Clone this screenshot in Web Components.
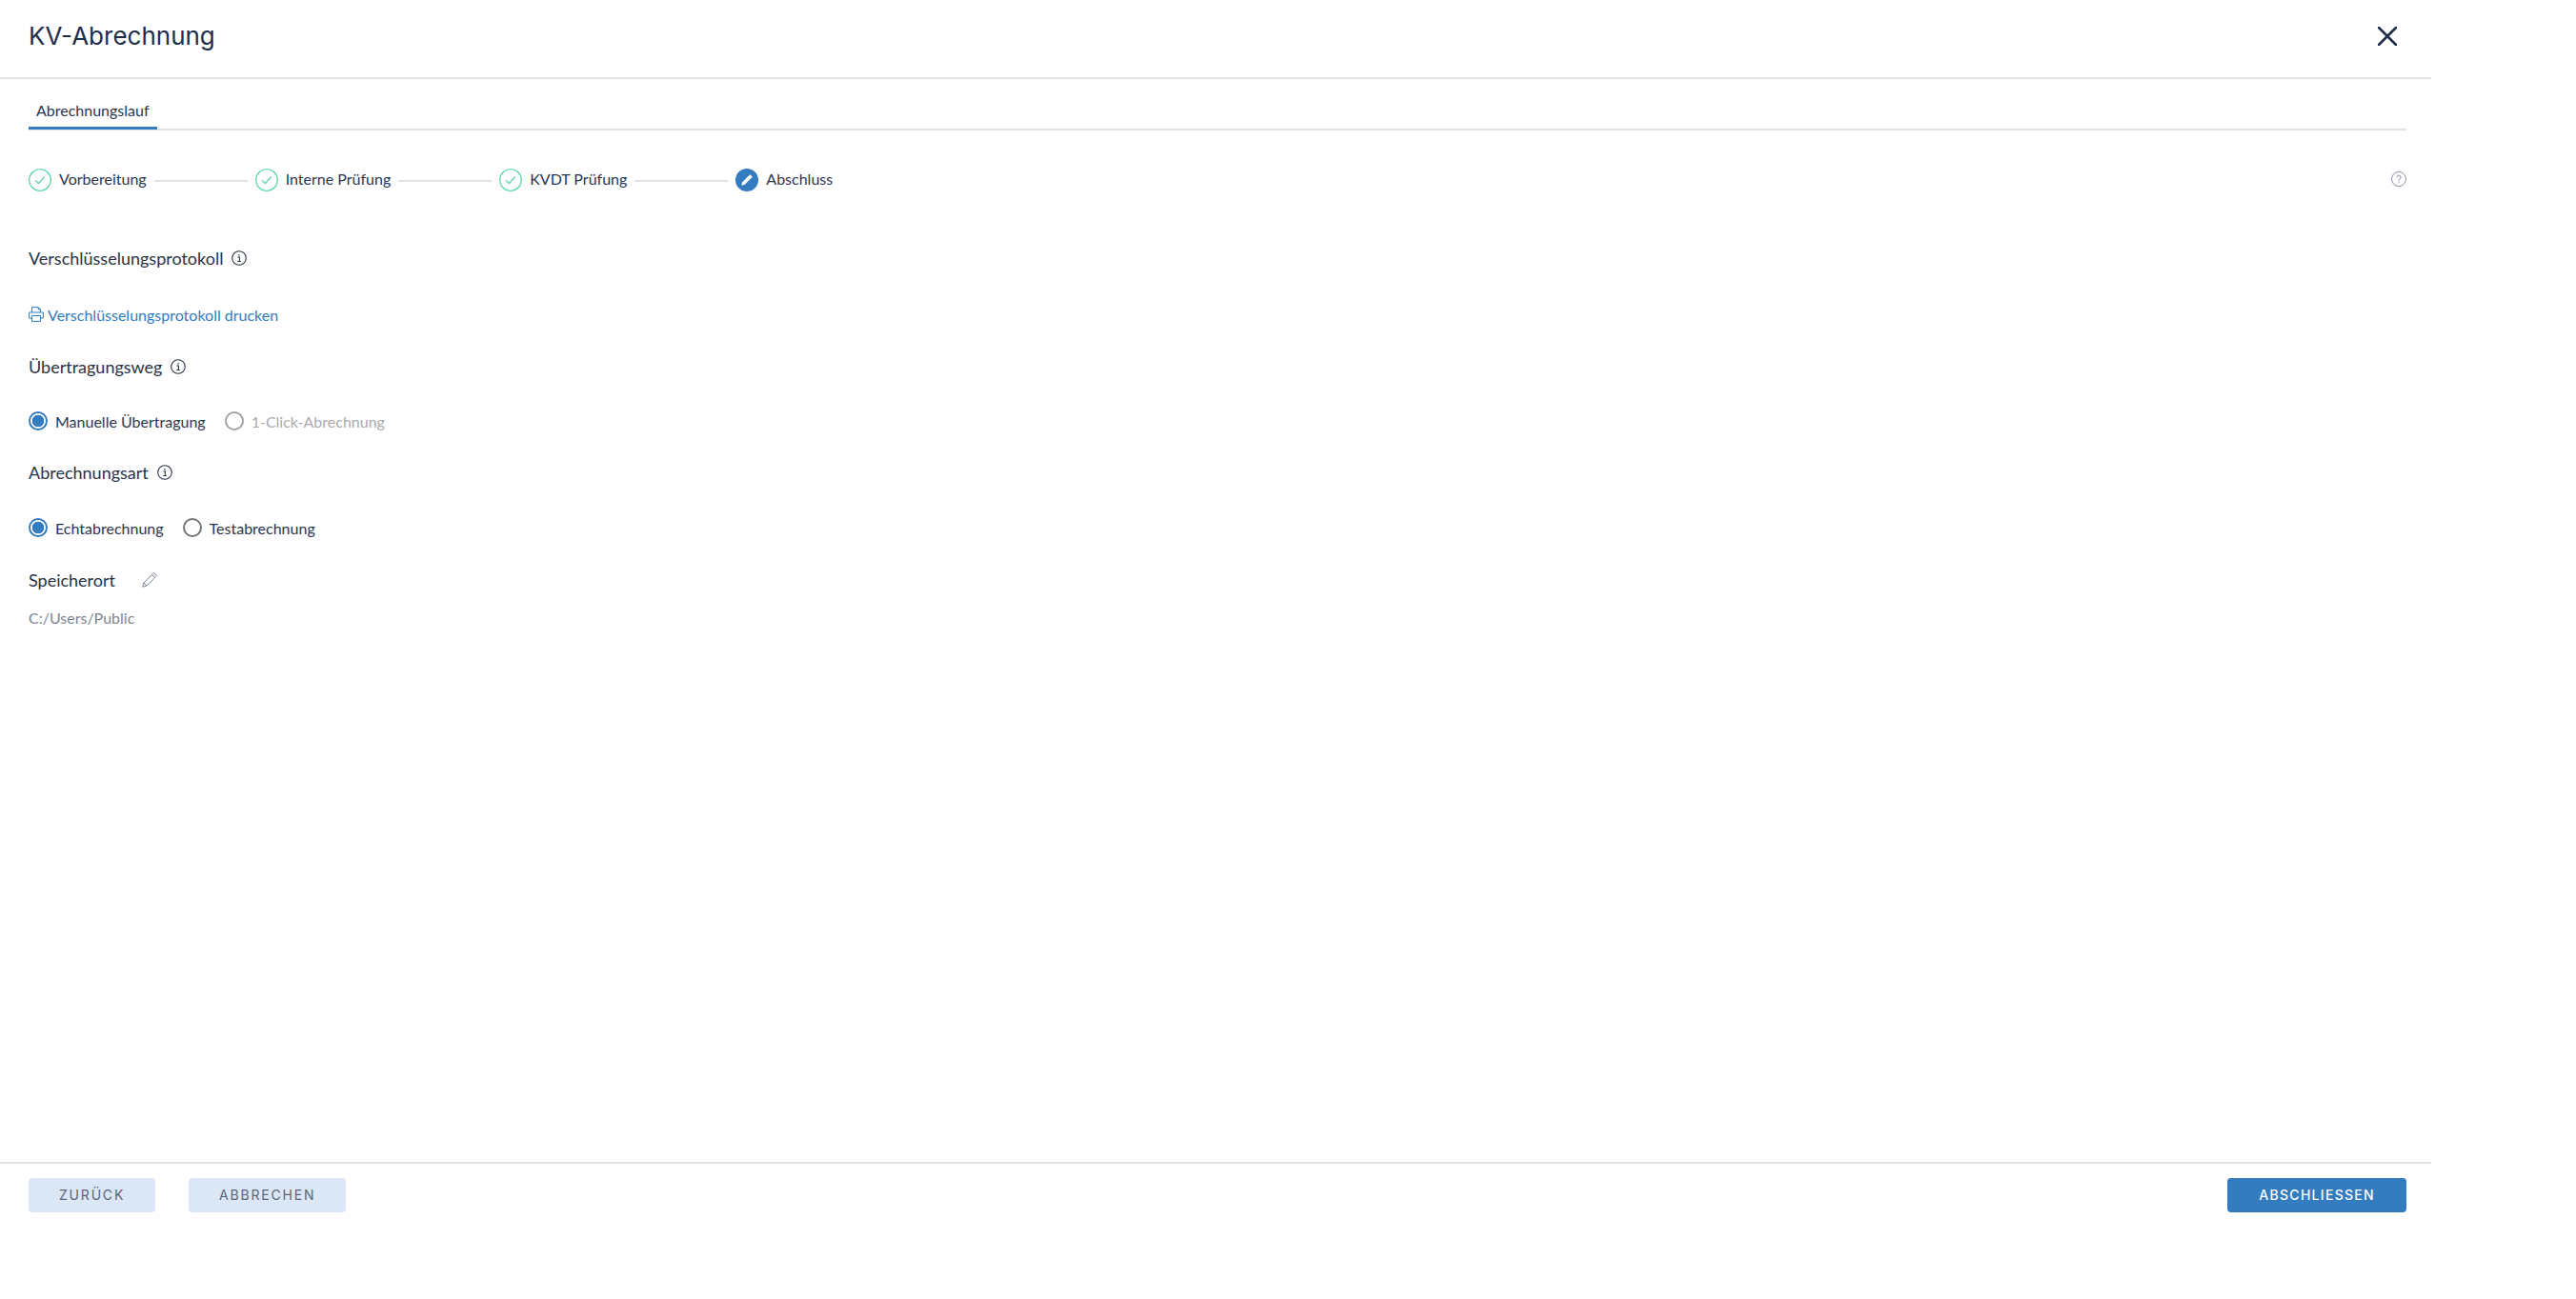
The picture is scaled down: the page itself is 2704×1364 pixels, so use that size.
<!DOCTYPE html>
<html lang="de">
<head>
<meta charset="utf-8">
<title>KV-Abrechnung</title>
<style>
  html, body { margin: 0; background: #fff; }
  body { font-family: Lato, "Liberation Sans", sans-serif; color: #22304d; }
</style>
</head>
<body>

<kv-dialog heading="KV-Abrechnung">
  <kv-tabs label="Abrechnungslauf"></kv-tabs>
  <kv-stepper>
    <kv-step state="done">Vorbereitung</kv-step>
    <kv-step state="done">Interne Prüfung</kv-step>
    <kv-step state="done">KVDT Prüfung</kv-step>
    <kv-step state="active" last>Abschluss</kv-step>
  </kv-stepper>

  <kv-heading info top="58">Verschlüsselungsprotokoll</kv-heading>
  <kv-print-link>Verschlüsselungsprotokoll drucken</kv-print-link>

  <kv-heading info top="33">Übertragungsweg</kv-heading>
  <kv-radio-group>
    <kv-radio checked>Manuelle Übertragung</kv-radio>
    <kv-radio disabled>1-Click-Abrechnung</kv-radio>
  </kv-radio-group>

  <kv-heading info top="32">Abrechnungsart</kv-heading>
  <kv-radio-group style="margin-top: 36px">
    <kv-radio checked>Echtabrechnung</kv-radio>
    <kv-radio>Testabrechnung</kv-radio>
  </kv-radio-group>

  <kv-heading edit top="33">Speicherort</kv-heading>
  <kv-path>C:/Users/Public</kv-path>

  <kv-button slot="footer">Zurück</kv-button>
  <kv-button slot="footer">Abbrechen</kv-button>
  <kv-button slot="footer-end" primary>Abschliessen</kv-button>
</kv-dialog>

<script>
const BLUE = '#337cc0'

const ICONS = {
  close: `<svg width="20" height="20" viewBox="0 0 20 20" fill="none" stroke="#1f2d4d" stroke-width="2.6" stroke-linecap="round"><path d="M1 1l18 18M19 1L1 19"/></svg>`,
  check: `<svg width="24" height="24" viewBox="0 0 24 24" fill="none"><circle cx="12" cy="12" r="11.25" stroke="#4fd3a0" stroke-width="1.2"/><path d="M7.2 12.4l3.2 3.2 6.4-7" stroke="#4fd3a0" stroke-width="1.3"/></svg>`,
  edit: `<svg width="24" height="24" viewBox="0 0 24 24"><circle cx="12" cy="12" r="12" fill="${BLUE}"/><path d="M6.3 17.7l.9-3.5 7.5-7.5a1 1 0 0 1 1.4 0l1.2 1.2a1 1 0 0 1 0 1.4l-7.5 7.5z" fill="#fff"/></svg>`,
  help: `<svg width="16" height="16" viewBox="0 0 16 16" fill="none" stroke="#7c8798"><circle cx="8" cy="8" r="7.5" stroke-width=".9"/><path d="M5.9 6.2a2.1 2.1 0 1 1 3.3 1.7c-.8.5-1.2.9-1.2 1.9" stroke-width="1"/><path d="M8 11.2v1.1" stroke-width="1.1"/></svg>`,
  info: `<svg width="16" height="16" viewBox="0 0 16 16" fill="none" stroke="#2a3346"><circle cx="8" cy="8" r="7.3" stroke-width="1.1"/><path d="M6.4 7h2v4.4M6.2 11.5h3.6" stroke-width="1.1"/><path d="M8 4.2v1.4" stroke-width="1.4"/></svg>`,
  printer: `<svg width="16" height="16" viewBox="0 0 16 16" fill="none" stroke="${BLUE}" stroke-width="1"><path d="M3.5 6V.6h6.8l2.2 2.2V6M10.2.6v2.3h2.3"/><path d="M3.5 12H.6V6h14.8v6h-2.9"/><path d="M3.5 9.5h9v5.9h-9z"/></svg>`,
  pencil: `<svg width="16" height="16" viewBox="0 0 16 16" fill="none" stroke="#7d8794" stroke-width="1"><path d="M.8 15.2l1-4.2L11.7 1.1a1.3 1.3 0 0 1 1.8 0l1.4 1.4a1.3 1.3 0 0 1 0 1.8L5 14.2z"/><path d="M1.8 11L5 14.2M10.4 2.4l3.2 3.2"/></svg>`
}

class KvDialog extends HTMLElement {
  constructor() {
    super()
    this.attachShadow({mode: 'open'})
    this.shadowRoot.innerHTML = `
      <style>
        :host { display: flex; flex-direction: column; width: 2552px; height: 1290px; box-sizing: border-box; }
        header { display: flex; justify-content: space-between; align-items: center; height: 83px; padding: 0 36px 6px 30px; box-sizing: border-box; border-bottom: 2px solid #e1e2e4; }
        h1 { margin: 0; font: 400 26px Inter, "Liberation Sans", sans-serif; color: #1f2d4d; }
        .close { display: flex; padding: 0; }
        main { flex: 1; padding: 0 26px 0 30px; display: flex; flex-direction: column; align-items: flex-start; }
        footer { display: flex; align-items: flex-start; gap: 35px; padding: 15px 26px 0 30px; border-top: 2px solid #e1e2e4; height: 53px; box-sizing: content-box; }
        .push { margin-left: auto; }
      </style>
      <header><h1></h1><span class="close">${ICONS.close}</span></header>
      <main><slot></slot></main>
      <footer><slot name="footer"></slot><span class="push"><slot name="footer-end"></slot></span></footer>
    `
  }

  connectedCallback() {
    this.shadowRoot.querySelector('h1').textContent = this.getAttribute('heading')
  }
}

class KvTabs extends HTMLElement {
  constructor() {
    super()
    this.attachShadow({mode: 'open'})
    this.shadowRoot.innerHTML = `
      <style>
        :host { display: block; width: 2496px; height: 54px; box-sizing: border-box; border-bottom: 2px solid #e1e2e4; }
        span { display: inline-block; box-sizing: border-box; height: 53px; padding: 23px 8px 0; font-size: 16px; line-height: 20px; border-bottom: 3px solid ${BLUE}; color: #2a3550; }
      </style>
      <span></span>
    `
  }

  connectedCallback() {
    this.shadowRoot.querySelector('span').textContent = this.getAttribute('label')
  }
}

class KvStepper extends HTMLElement {
  constructor() {
    super()
    this.attachShadow({mode: 'open'})
    this.shadowRoot.innerHTML = `
      <style>
        :host { display: flex; align-items: center; width: 2496px; height: 24px; margin-top: 40px; }
        .help { display: flex; margin-left: auto; position: relative; top: -1px; }
      </style>
      <slot></slot>
      <span class="help">${ICONS.help}</span>
    `
  }
}

class KvStep extends HTMLElement {
  constructor() {
    super()
    this.attachShadow({mode: 'open'})
  }

  connectedCallback() {
    const icon = this.getAttribute('state') === 'active' ? ICONS.edit : ICONS.check
    const line = this.hasAttribute('last') ? '' : '<i></i>'
    this.shadowRoot.innerHTML = `
      <style>
        :host { display: flex; align-items: center; height: 24px; font-size: 16px; color: #2a3550; }
        svg { display: block; }
        span { margin-left: 8px; line-height: 20px; position: relative; top: -1px; }
        i { display: block; width: 98px; height: 2px; background: #e1e2e4; margin: 1px 8px 0; }
      </style>
      ${icon}<span><slot></slot></span>${line}
    `
  }
}

class KvHeading extends HTMLElement {
  constructor() {
    super()
    this.attachShadow({mode: 'open'})
  }

  connectedCallback() {
    this.style.marginTop = (this.getAttribute('top') || 0) + 'px'
    const icon = this.hasAttribute('info') ? `<b class="info">${ICONS.info}</b>`
      : this.hasAttribute('edit') ? `<b class="edit">${ICONS.pencil}</b>` : ''
    this.shadowRoot.innerHTML = `
      <style>
        :host { display: flex; align-items: center; height: 24px; font-size: 18px; color: #2a3346; }
        b { display: flex; }
        .info { margin-left: 9px; }
        .edit { margin-left: 28px; }
      </style>
      <slot></slot>${icon}
    `
  }
}

class KvPrintLink extends HTMLElement {
  constructor() {
    super()
    this.attachShadow({mode: 'open'})
    this.shadowRoot.innerHTML = `
      <style>
        :host { display: flex; align-items: center; gap: 4px; height: 20px; margin-top: 37px; font-size: 16px; color: ${BLUE}; }
        svg { display: block; }
      </style>
      ${ICONS.printer}<slot></slot>
    `
  }
}

class KvRadioGroup extends HTMLElement {
  constructor() {
    super()
    this.attachShadow({mode: 'open'})
    this.shadowRoot.innerHTML = `
      <style>
        :host { display: flex; gap: 20px; height: 20px; margin-top: 35px; }
      </style>
      <slot></slot>
    `
  }
}

class KvRadio extends HTMLElement {
  constructor() {
    super()
    this.attachShadow({mode: 'open'})
    this.shadowRoot.innerHTML = `
      <style>
        :host { display: flex; align-items: center; gap: 8px; font-size: 16px; color: #2a3550; }
        .dot { box-sizing: border-box; width: 20px; height: 20px; border-radius: 50%; border: 2px solid #757575; background: #fff; }
        :host([checked]) .dot { border-color: ${BLUE}; background: radial-gradient(circle, ${BLUE} 0 6px, #fff 6.6px); }
        :host([disabled]) { color: #a9abae; }
        :host([disabled]) .dot { border-color: #a3a3a3; }
      </style>
      <span class="dot"></span><slot></slot>
    `
  }
}

class KvPath extends HTMLElement {
  constructor() {
    super()
    this.attachShadow({mode: 'open'})
    this.shadowRoot.innerHTML = `
      <style>
        :host { display: block; margin-top: 18px; font-size: 16px; line-height: 20px; color: #7e8590; }
      </style>
      <slot></slot>
    `
  }
}

class KvButton extends HTMLElement {
  constructor() {
    super()
    this.attachShadow({mode: 'open'})
    this.shadowRoot.innerHTML = `
      <style>
        :host { display: inline-flex; align-items: center; box-sizing: border-box; height: 36px; padding: 0 32px 1px; border-radius: 4px; background: #dbe7f4; color: #59667d; font: 400 14px Inter, "Liberation Sans", sans-serif; letter-spacing: 1.8px; text-transform: uppercase; }
        :host([primary]) { background: ${BLUE}; color: #fff; font-weight: 500; letter-spacing: 1.3px; padding: 0 33px 1px; }
      </style>
      <slot></slot>
    `
  }
}

customElements.define('kv-dialog', KvDialog)
customElements.define('kv-tabs', KvTabs)
customElements.define('kv-stepper', KvStepper)
customElements.define('kv-step', KvStep)
customElements.define('kv-heading', KvHeading)
customElements.define('kv-print-link', KvPrintLink)
customElements.define('kv-radio-group', KvRadioGroup)
customElements.define('kv-radio', KvRadio)
customElements.define('kv-path', KvPath)
customElements.define('kv-button', KvButton)
</script>
</body>
</html>
